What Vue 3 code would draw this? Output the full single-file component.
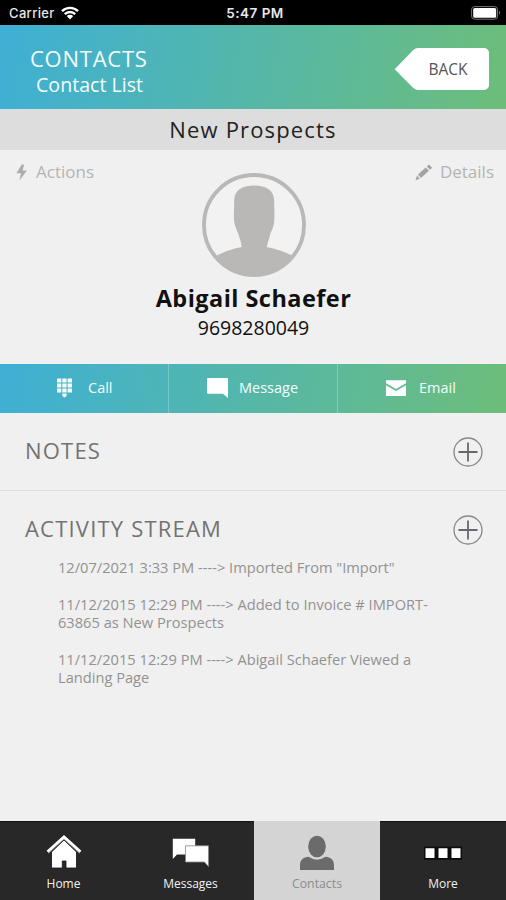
<script setup>
import { ref } from "vue";

const activeTab = ref("Contacts");

const tabs = ["Home", "Messages", "Contacts", "More"];

const activities = [
  { id: 1, lines: ['12/07/2021 3:33 PM ----> Imported From "Import"'] },
  {
    id: 2,
    lines: ["11/12/2015 12:29 PM ----> Added to Invoice # IMPORT-", "63865 as New Prospects"],
  },
  {
    id: 3,
    lines: ["11/12/2015 12:29 PM ----> Abigail Schaefer Viewed a", "Landing Page"],
  },
];
</script>

<template>
  <div class="screen">
    <div class="status-bar">
      <div class="carrier">
        <span>Carrier</span>
        <svg class="wifi" viewBox="0 0 18 14" width="18" height="14">
          <path d="M1 5.2A11.3 11.3 0 0 1 17 5.2M3.8 8.2A7.3 7.3 0 0 1 14.2 8.2" fill="none" stroke="#fff" stroke-width="2.4" />
          <path d="M5.8 10.1a4.5 4.5 0 0 1 6.4 0L9 13.6z" fill="#fff" />
        </svg>
      </div>
      <span class="time">5:47 PM</span>
      <svg class="battery" viewBox="0 0 30 14" width="30" height="14">
        <rect x="0.6" y="0.6" width="26" height="12.6" rx="3" fill="none" stroke="#777" stroke-width="1" />
        <rect x="2.2" y="2" width="23" height="9.8" rx="1.6" fill="#fff" />
        <path d="M28 4.8q2 2 0 4z" fill="#888" />
      </svg>
    </div>

    <header class="header">
      <div class="heading">
        <h1>CONTACTS</h1>
        <p>Contact List</p>
      </div>
      <button class="back">
        <svg viewBox="0 0 95 42" width="95" height="42">
          <path d="M0.7 21.3 19 2.2Q21.5 0 24 0H90a5 5 0 0 1 5 5V37a5 5 0 0 1-5 5H24Q21.5 42 19 39.8z" fill="#fff" />
        </svg>
        <span>BACK</span>
      </button>
    </header>

    <div class="group-title"><span>New Prospects</span></div>

    <section class="profile">
      <div class="profile-links">
        <a class="actions">
          <svg viewBox="0 0 12 17" width="12" height="17">
            <path d="M5.7 0.5 0.4 9.3H5L3.4 16.5 11 6.4H6.6L8.2 0.5z" fill="#adadad" />
          </svg>
          <span>Actions</span>
        </a>
        <a class="details">
          <svg viewBox="0 0 18 17" width="18" height="17">
            <path d="M0.5 16.2 2 11.6 4.8 14.8zM3 10.6 10.7 3.5 13.9 6.7 6 14z" fill="#a3a3a3" />
            <path d="M11.8 2.4 14 0.6 17.1 3.7 15 5.7z" fill="#a3a3a3" />
          </svg>
          <span>Details</span>
        </a>
      </div>

      <svg class="avatar" viewBox="0 0 104 104" width="104" height="104">
        <clipPath id="avatar-clip"><circle cx="52" cy="52" r="51" /></clipPath>
        <circle cx="52" cy="52" r="50" fill="#f2f2f2" />
        <path
          clip-path="url(#avatar-clip)"
          d="M52 12.500C40 12.500 32.200 17 32.200 28C32.200 36 31.500 42 32.200 49C32.700 53 34.500 56 36 60C37.500 65 39 68 39.700 74Q26 76.500 14 83V104H91V83Q78 76.500 64.700 74C66 68 67.500 65 68.500 60C70.500 56 71.800 53 72.200 49C72.800 42 72.200 36 72.200 28C72.200 17 64 12.500 52 12.500Z"
          fill="#b9b8b6"
        />
        <circle cx="52" cy="52" r="50" fill="none" stroke="#b9b8b6" stroke-width="3.8" />
      </svg>

      <h2 class="name"><span>Abigail Schaefer</span></h2>
      <p class="phone"><span>9698280049</span></p>
    </section>

    <div class="quick-actions">
      <button class="quick call">
        <svg viewBox="0 0 15 20" width="15" height="20">
          <path d="M0 0.5H4.3V4.5H0zM5.3 0.5H9.6V4.5H5.3zM10.6 0.5H15V4.5H10.6zM0 5.5H4.3V9.5H0zM5.3 5.5H9.6V9.5H5.3zM10.6 5.5H15V9.5H10.6zM0 10.5H4.3V14.5H0zM5.3 10.5H9.6V14.5H5.3zM10.6 10.5H15V14.5H10.6zM5.3 15.5H9.6V18L7.5 19.6 5.3 18z" fill="#f4fdff" />
        </svg>
        <span>Call</span>
      </button>
      <button class="quick message">
        <svg viewBox="0 0 21 20" width="21" height="20">
          <path d="M1 0H20Q21 0 21 1V20L16 15.8H1Q0 15.8 0 14.8V1Q0 0 1 0Z" fill="#fff" />
        </svg>
        <span>Message</span>
      </button>
      <button class="quick email">
        <svg viewBox="0 0 20 16" width="20" height="16">
          <path d="M0 0.3H20V3.2L10 9 0 3.2zM0 5.3 10 11 20 5.3V16H0z" fill="#fff" />
        </svg>
        <span>Email</span>
      </button>
    </div>

    <section class="notes">
      <h3>NOTES</h3>
      <button class="add">
        <svg viewBox="0 0 30 30" width="30" height="30">
          <circle cx="15" cy="15" r="14" fill="none" stroke="#85878a" stroke-width="1.3" />
          <path d="M15 5.5V24.5M5.5 15H24.5" stroke="#66696d" stroke-width="1.8" />
        </svg>
      </button>
    </section>

    <section class="stream">
      <div class="stream-head">
        <h3>ACTIVITY STREAM</h3>
        <button class="add">
          <svg viewBox="0 0 30 30" width="30" height="30">
            <circle cx="15" cy="15" r="14" fill="none" stroke="#85878a" stroke-width="1.3" />
            <path d="M15 5.5V24.5M5.5 15H24.5" stroke="#66696d" stroke-width="1.8" />
          </svg>
        </button>
      </div>
      <ul>
        <li v-for="item in activities" :key="item.id">
          <div v-for="line in item.lines" :key="line"><span>{{ line }}</span></div>
        </li>
      </ul>
    </section>

    <nav class="tab-bar">
      <button
        v-for="tab in tabs"
        :key="tab"
        class="tab"
        :class="{ active: tab === activeTab }"
        @click="activeTab = tab"
      >
        <svg viewBox="0 0 40 38" width="40" height="38">
          <template v-if="tab === 'Home'">
            <path d="M20 7 32.5 19V35H22V28H18.3V35H7.5V19z" fill="#fff" stroke="#111" stroke-width="0.8" />
            <path d="M4.5 20.3 20 6 35.5 20.3" fill="none" stroke="#888" stroke-width="1" />
            <path d="M3.5 18.8 20 4 36.5 18.8" fill="none" stroke="#fff" stroke-width="2.8" />
          </template>
          <template v-else-if="tab === 'Messages'">
            <path d="M1.800 5.800H24.200V21.500H6L1.800 26z" fill="#fff" />
            <path d="M14.500 12.800H37.500V33.500L33.500 29H14.500z" fill="#fff" stroke="#888" stroke-width="0.8" />
          </template>
          <template v-else-if="tab === 'Contacts'">
            <ellipse cx="20" cy="13.5" rx="8.8" ry="10.8" fill="#6b6b6b" />
            <path d="M3 37V32C3 26.500 7 24.300 11.500 23.800Q20 29.500 28.500 23.800C33 24.300 37 26.500 37 32V37z" fill="#6b6b6b" />
          </template>
          <template v-else>
            <path d="M1 13.500H39V26.800H1z" fill="#0c0c0c" />
            <path d="M2.500 15.200H11.500V25H2.500zM15.500 15.200H24.500V25H15.500zM28.500 15.200H37.500V25H28.500z" fill="#fff" />
          </template>
        </svg>
        <span>{{ tab }}</span>
      </button>
    </nav>
  </div>
</template>

<style>
body {
  margin: 0;
  background: #f0f0f0;
}
</style>

<style scoped>
.screen {
  width: 506px;
  height: 900px;
  display: flex;
  flex-direction: column;
  overflow: hidden;
  background: #f0f0f0;
  font-family: "Open Sans", sans-serif;
}

h1,
h2,
h3,
p,
ul {
  margin: 0;
  padding: 0;
  font-weight: 400;
}

button {
  padding: 0;
  border: none;
  background: none;
  font-family: inherit;
  color: inherit;
  cursor: pointer;
}

svg {
  display: block;
  flex: none;
}

span {
  white-space: nowrap;
}

/* status bar */
.status-bar {
  height: 25px;
  box-sizing: border-box;
  padding: 1px 5px 0 9px;
  display: grid;
  grid-template-columns: 1fr auto 1fr;
  align-items: center;
  background: #000;
  color: #e8e8e8;
  font-family: Inter, sans-serif;
  font-size: 13px;
}

.carrier {
  display: flex;
  align-items: center;
  gap: 6px;
  font-weight: 500;
  letter-spacing: 0.35px;
}

.time {
  font-size: 13.5px;
  font-weight: 600;
  letter-spacing: 0.5px;
}

.battery {
  justify-self: end;
}

/* header */
.header {
  height: 84px;
  box-sizing: border-box;
  padding: 0 17px 0 30px;
  display: flex;
  justify-content: space-between;
  background: linear-gradient(100deg, #3fb0d3 2%, #55b7a8 50%, #6cbd7c 98%);
  color: #f4fdff;
}

.heading h1 {
  margin-top: 19px;
  font-size: 22px;
  font-weight: 500;
  line-height: 28px;
  letter-spacing: 0.75px;
}

.heading p {
  margin-left: 6px;
  font-size: 19.6px;
  line-height: 26px;
}

.back {
  display: grid;
  height: 42px;
  margin-top: 23px;
  align-items: center;
}

.back > * {
  grid-area: 1 / 1;
}

.back span {
  padding-left: 13px;
  font-size: 15.5px;
  color: #555;
}

/* group title */
.group-title {
  height: 41px;
  line-height: 41px;
  background: #dddddd;
  color: #222;
  text-align: center;
  font-size: 22px;
  letter-spacing: 1.15px;
}

/* profile */
.profile {
  height: 214px;
  display: flex;
  flex-direction: column;
  align-items: center;
}

.profile-links {
  align-self: stretch;
  height: 23px;
  padding: 10px 12px 0 16px;
  display: flex;
  justify-content: space-between;
  box-sizing: border-box;
  color: #b4b4b4;
  font-size: 17px;
  line-height: 24px;
}

.profile-links a {
  display: flex;
  height: 24px;
  align-items: center;
}

.actions {
  gap: 8px;
}

.details {
  gap: 7px;
}

.avatar {
  margin-left: 2px;
}

.name {
  margin-top: 4px;
  padding-left: 1px;
  font-size: 23.5px;
  font-weight: 700;
  line-height: 34px;
  letter-spacing: 0.45px;
  color: #111;
}

.phone {
  margin-top: -2px;
  padding-left: 1px;
  font-size: 19.5px;
  line-height: 29px;
  color: #111;
}

/* quick actions */
.quick-actions {
  height: 49px;
  display: grid;
  grid-template-columns: 168px 169px 169px;
  background: linear-gradient(100deg, #3fb0d3 2%, #55b7a8 50%, #6cbd7c 98%);
  color: #f4fdff;
}

.quick {
  display: flex;
  align-items: center;
  padding-bottom: 2px;
  font-size: 14.5px;
  font-weight: 500;
}

.quick + .quick {
  border-left: 1px solid rgba(255, 255, 255, 0.25);
}

.call {
  padding-left: 57px;
  gap: 16px;
}

.message {
  padding-left: 38px;
  gap: 11px;
}

.email {
  padding-left: 48px;
  gap: 13px;
}

/* sections */
h3 {
  padding-bottom: 3px;
  font-size: 22px;
  line-height: 30px;
  color: #737373;
  letter-spacing: 1.2px;
}

.notes {
  height: 78px;
  box-sizing: border-box;
  padding: 0 23px 0 25px;
  display: flex;
  align-items: center;
  justify-content: space-between;
  border-bottom: 1px solid #dddddd;
}

.stream {
  flex: 1;
  padding-top: 23px;
}

.stream-head {
  height: 31px;
  padding: 0 23px 0 25px;
  display: flex;
  align-items: center;
  justify-content: space-between;
}

.stream ul {
  margin: 13px 0 0 58px;
  list-style: none;
  font-size: 14.65px;
  line-height: 18.3px;
  color: #929292;
}

.stream li {
  margin-bottom: 18.5px;
}

/* tab bar */
.tab-bar {
  height: 79px;
  display: grid;
  grid-template-columns: 127px 127px 126px 126px;
  background: #282828;
  color: #f2f2f2;
}

.tab {
  padding-top: 11px;
  display: flex;
  flex-direction: column;
  align-items: center;
  border-top: 1px solid #111;
  font-size: 12px;
  line-height: 22px;
  font-weight: 500;
}

.tab span {
  margin-top: 2px;
}

.tab.active {
  background: #d4d4d4;
  border-color: #d4d4d4;
  color: #8c8c8c;
  font-size: 12.3px;
}
</style>
